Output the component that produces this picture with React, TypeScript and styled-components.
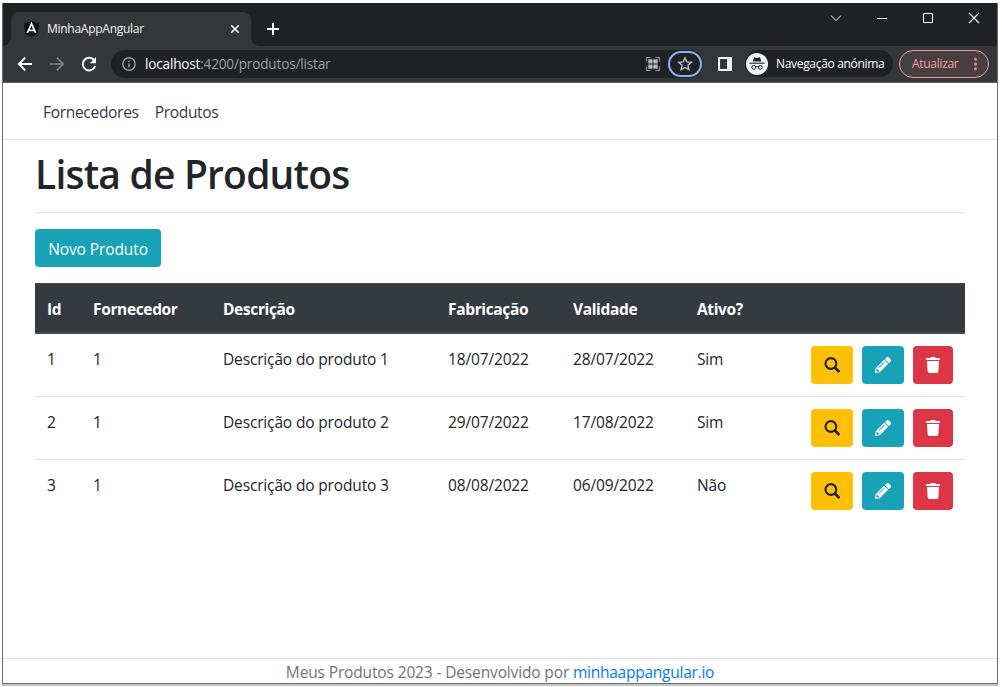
import React from "react";
import styled, { createGlobalStyle } from "styled-components";
import { FaPencilAlt, FaTrash } from "react-icons/fa";

const GlobalStyle = createGlobalStyle`
  * { box-sizing: border-box; }
  body {
    margin: 0;
    background: #fff;
    font-family: "Open Sans", "Noto Sans", sans-serif;
    color: #212529;
  }
  svg { display: block; flex: none; }
`;

const Desktop = styled.div`
  height: 687px;
  padding: 3px 4px 0 2px;
  overflow: hidden;
`;

const BrowserWindow = styled.div`
  display: flex;
  flex-direction: column;
  height: 681px;
  border: 1px solid #6b6b6b;
  border-top: 0;
  box-shadow: 0 2px 0 #c4c5c4;
`;

const TabStrip = styled.div`
  display: flex;
  height: 43px;
  flex: none;
  background: #202124;
`;

const Tab = styled.div`
  position: relative;
  display: flex;
  align-items: center;
  width: 240px;
  height: 34px;
  margin: 9px 0 0 8px;
  padding: 0 11px 0 13px;
  border-radius: 8px 8px 0 0;
  background: #35363a;
  &::before, &::after {
    content: "";
    position: absolute;
    bottom: 0;
    width: 8px;
    height: 8px;
  }
  &::before { left: -8px; background: radial-gradient(circle at 0 0, transparent 7.5px, #35363a 8px); }
  &::after { right: -8px; background: radial-gradient(circle at 100% 0, transparent 7.5px, #35363a 8px); }
`;

const TabTitle = styled.span`
  flex: 1;
  margin-left: 8px;
  font-size: 12px;
  line-height: 16px;
  letter-spacing: -0.27px;
  color: #f1f3f4;
`;

const NewTab = styled.div`
  margin: 20px 0 0 16px;
`;

const WindowControls = styled.div`
  display: flex;
  align-items: center;
  gap: 34px;
  height: 30px;
  margin-left: auto;
  padding-right: 17px;
`;

const Toolbar = styled.div`
  display: flex;
  align-items: center;
  height: 37px;
  flex: none;
  padding: 0 8px 1px 14px;
  border-bottom: 1px solid #5c5d60;
  background: #35363a;
`;

const NavIcons = styled.div`
  display: flex;
  gap: 16px;
`;

const AddressBar = styled.div`
  display: flex;
  align-items: center;
  width: 592px;
  height: 28px;
  margin-left: 14px;
  padding: 0 1px 0 11px;
  border-radius: 14px;
  background: #202124;
`;

const Url = styled.span`
  flex: 1;
  margin-left: 9px;
  padding-top: 1px;
  font-size: 13.6px;
  line-height: 20px;
  letter-spacing: -0.19px;
  color: #9aa0a6;
  b { font-weight: 400; color: #fff; }
`;

const StarButton = styled.span`
  display: flex;
  align-items: center;
  justify-content: center;
  width: 34px;
  height: 26px;
  margin-left: 8px;
  border: 2px solid #8ab4f8;
  border-radius: 13px;
`;

const SidePanelIcon = styled.span`
  width: 14px;
  height: 14px;
  margin-left: 15px;
  border: 2px solid #f1f3f4;
  border-right-width: 5px;
`;

const Incognito = styled.div`
  display: flex;
  align-items: center;
  gap: 8px;
  width: 148px;
  height: 27px;
  margin-left: 13px;
  padding-left: 1px;
  border-radius: 14px;
  background: #202124;
  color: #fff;
  font-size: 12px;
  letter-spacing: -0.32px;
  white-space: nowrap;
`;

const UpdateButton = styled.div`
  display: flex;
  align-items: center;
  justify-content: space-between;
  width: 90px;
  height: 28px;
  margin-left: 6px;
  padding: 0 11px 0 12px;
  border: 1px solid #f0a199;
  border-radius: 14px;
  background: #463e40;
  color: #f5a199;
  font-size: 12px;
  letter-spacing: -0.3px;
`;

const Navbar = styled.nav`
  display: flex;
  gap: 16px;
  height: 57px;
  flex: none;
  padding: 17px 40px 15px;
  border-bottom: 1px solid #dfe2e4;
`;

const NavLink = styled.a`
  font-size: 15.5px;
  line-height: 24px;
  letter-spacing: -0.3px;
  color: #343a40;
`;

const Main = styled.main`
  flex: 1;
  padding: 10px 32px 0;
`;

const Title = styled.h1`
  margin: 0;
  font-size: 39px;
  font-weight: 600;
  line-height: 48px;
  letter-spacing: -0.8px;
`;

const Divider = styled.hr`
  height: 1px;
  margin: 14px 0 16px;
  border: 0;
  background: #e3e3e3;
`;

const NewButton = styled.button`
  display: block;
  width: 126px;
  height: 38px;
  margin-bottom: 16px;
  padding: 2px 0 0;
  border: 0;
  border-radius: 4px;
  background: #17a2b8;
  color: #fff;
  font: 400 15.5px/24px "Open Sans", sans-serif;
  letter-spacing: -0.1px;
`;

const Table = styled.table`
  width: 930px;
  table-layout: fixed;
  border-collapse: separate;
  border-spacing: 0;
`;

const HeadCell = styled.th`
  height: 51px;
  padding: 2px 12px 0;
  border-top: 1px solid #454d55;
  border-bottom: 2px solid #454d55;
  background: #343a40;
  color: #fff;
  font-size: 15.5px;
  font-weight: 700;
  line-height: 24px;
  letter-spacing: -0.35px;
  text-align: left;
`;

const Row = styled.tr`
  &:not(:first-child) td { border-top: 1px solid #dee2e6; }
  &:first-child td { height: 62px; }
`;

const Cell = styled.td`
  height: 63px;
  padding: 13px 12px 0;
  font-size: 15.5px;
  line-height: 24px;
  letter-spacing: -0.15px;
  vertical-align: top;
  white-space: nowrap;
`;

const ActionsCell = styled(Cell)`
  padding-top: 12px;
`;

const Actions = styled.div`
  display: flex;
  gap: 9px;
`;

const ActionButton = styled.button<{ $bg: string; $fg?: string; $width?: number }>`
  display: flex;
  align-items: center;
  justify-content: center;
  width: ${(p) => p.$width ?? 42}px;
  height: 38px;
  padding: 0;
  border: 0;
  border-radius: 4px;
  background: ${(p) => p.$bg};
  color: ${(p) => p.$fg ?? "#fff"};
  font-size: 16px;
`;

const Footer = styled.footer`
  height: 25px;
  flex: none;
  padding-top: 1px;
  border-top: 1px solid #dedfe6;
  color: #6c757d;
  font-size: 15.5px;
  line-height: 24px;
  letter-spacing: -0.14px;
  text-align: center;
  a { color: #007bff; letter-spacing: -0.25px; }
`;

const columns = [
  { label: "Id", width: 46 },
  { label: "Fornecedor", width: 130 },
  { label: "Descrição", width: 225 },
  { label: "Fabricação", width: 125 },
  { label: "Validade", width: 124 },
  { label: "Ativo?", width: 114 },
  { label: "", width: 166 },
];

const products = [
  ["1", "1", "Descrição do produto 1", "18/07/2022", "28/07/2022", "Sim"],
  ["2", "1", "Descrição do produto 2", "29/07/2022", "17/08/2022", "Sim"],
  ["3", "1", "Descrição do produto 3", "08/08/2022", "06/09/2022", "Não"],
];

const AngularIcon = () => (
  <svg width="15" height="16" viewBox="0 0 15 16">
    <path d="M7.5 0 15 2.6 13.9 12.4 7.5 16 1.1 12.4 0 2.6Z" fill="#0c0f18" />
    <path d="M3.3 12 7.5 2.6 11.7 12M5 9.3H10" fill="none" stroke="#f4f4f4" strokeWidth="1.8" />
  </svg>
);

const Stroke = ({ d, w = 16, h = 16, color = "#fff", sw = 1 }: { d: string; w?: number; h?: number; color?: string; sw?: number }) => (
  <svg width={w} height={h} viewBox={`0 0 ${w} ${h}`} fill="none" stroke={color} strokeWidth={sw}>
    <path d={d} />
  </svg>
);

const ReloadIcon = () => (
  <svg width="16" height="16" viewBox="0 0 16 16">
    <path d="M13.4 4.6A6.3 6.3 0 1 0 14.2 9.8" fill="none" stroke="#f4f4f4" strokeWidth="2" />
    <path d="M15 1V7.2H8.8Z" fill="#f4f4f4" />
  </svg>
);

const InfoIcon = () => (
  <svg width="14" height="14" viewBox="0 0 14 14">
    <circle cx="7" cy="7" r="6.2" fill="none" stroke="#9aa0a6" strokeWidth="1.4" />
    <path d="M6.3 3.5H7.7V5H6.3ZM6.3 6.2H7.7V10.5H6.3Z" fill="#9aa0a6" />
  </svg>
);

const QrIcon = () => (
  <svg width="14" height="14" viewBox="0 0 14 14">
    <path d="M.5 4.5V.5H4.5M9.5.5H13.5V4.5M13.5 9.5V13.5H9.5M4.5 13.5H.5V9.5" fill="none" stroke="#a0a3a7" />
    <path d="M2.3 2.3H6.6V6.6H2.3ZM7.4 2.3H11.7V6.6H7.4ZM2.3 7.4H6.6V11.7H2.3ZM7.4 7.4H11.7V11.7H7.4Z" fill="#b6b9bd" />
  </svg>
);

const StarIcon = () => (
  <svg width="16" height="16" viewBox="0 0 16 16">
    <path d="m8 1.8 1.8 4.1 4.5.4-3.4 3 1 4.4L8 11.4l-3.9 2.3 1-4.4-3.4-3 4.5-.4Z" fill="none" stroke="#c4c7ca" strokeWidth="1.3" />
  </svg>
);

const IncognitoIcon = () => (
  <svg width="22" height="22" viewBox="0 0 22 22">
    <circle cx="11" cy="11" r="11" fill="#f1f3f4" />
    <path d="M6.6 8.6 7.8 4.9Q8 4.2 8.8 4.4L11 5 13.2 4.4Q14 4.2 14.2 4.9L15.4 8.6Z" fill="#202124" />
    <path d="M3.5 10.2H18.5" stroke="#202124" strokeWidth="1.1" />
    <g fill="none" stroke="#202124" strokeWidth="1">
      <circle cx="7.7" cy="14.3" r="1.9" />
      <circle cx="14.3" cy="14.3" r="1.9" />
      <path d="M9.6 14Q11 13.3 12.4 14" />
    </g>
  </svg>
);

const DotsIcon = () => (
  <svg width="3" height="14" viewBox="0 0 3 14" fill="#f28b82">
    <circle cx="1.5" cy="2" r="1.5" />
    <circle cx="1.5" cy="7" r="1.5" />
    <circle cx="1.5" cy="12" r="1.5" />
  </svg>
);

const SearchIcon = () => (
  <svg width="16" height="16" viewBox="0 0 16 16" fill="none" stroke="currentColor">
    <circle cx="6.9" cy="6.5" r="5.4" strokeWidth="2.1" />
    <path d="M10.6 10.3 15.3 15" strokeWidth="2.7" />
  </svg>
);

export default function App() {
  return (
    <Desktop>
      <GlobalStyle />
      <BrowserWindow>
        <TabStrip>
          <Tab>
            <AngularIcon />
            <TabTitle>MinhaAppAngular</TabTitle>
            <Stroke w={10} h={10} d="M1.2 1.2 8.8 8.8M8.8 1.2 1.2 8.8" sw={1.6} />
          </Tab>
          <NewTab>
            <Stroke w={12} h={12} d="M6 0V12M0 6H12" sw={2} />
          </NewTab>
          <WindowControls>
            <Stroke w={12} h={12} d="M1 3.5 6 8.5 11 3.5" />
            <Stroke w={12} h={12} d="M1 6.5H11" />
            <Stroke w={12} h={12} d="M1.5 1.5H10.5V10.5H1.5Z" />
            <Stroke w={12} h={12} d="M1 1 11 11M11 1 1 11" sw={1.2} />
          </WindowControls>
        </TabStrip>
        <Toolbar>
          <NavIcons>
            <Stroke d="M15 8H2M8.2 1.7 1.9 8 8.2 14.3" sw={1.9} />
            <Stroke d="M1 8H14M7.8 1.7 14.1 8 7.8 14.3" sw={1.7} color="#828387" />
            <ReloadIcon />
          </NavIcons>
          <AddressBar>
            <InfoIcon />
            <Url><b>localhost</b>:4200/produtos/listar</Url>
            <QrIcon />
            <StarButton><StarIcon /></StarButton>
          </AddressBar>
          <SidePanelIcon />
          <Incognito><IncognitoIcon />Navegação anónima</Incognito>
          <UpdateButton>Atualizar<DotsIcon /></UpdateButton>
        </Toolbar>
        <Navbar>
          <NavLink>Fornecedores</NavLink>
          <NavLink>Produtos</NavLink>
        </Navbar>
        <Main>
          <Title>Lista de Produtos</Title>
          <Divider />
          <NewButton>Novo Produto</NewButton>
          <Table>
            <colgroup>
              {columns.map((c) => <col key={c.label} width={c.width} />)}
            </colgroup>
            <thead>
              <tr>{columns.map((c) => <HeadCell key={c.label}>{c.label}</HeadCell>)}</tr>
            </thead>
            <tbody>
              {products.map((product) => (
                <Row key={product[0]}>
                  {product.map((value, i) => <Cell key={i}>{value}</Cell>)}
                  <ActionsCell>
                    <Actions>
                      <ActionButton $bg="#ffc107" $fg="#212529"><SearchIcon /></ActionButton>
                      <ActionButton $bg="#17a2b8"><FaPencilAlt /></ActionButton>
                      <ActionButton $bg="#dc3545" $width={40}><FaTrash /></ActionButton>
                    </Actions>
                  </ActionsCell>
                </Row>
              ))}
            </tbody>
          </Table>
        </Main>
        <Footer>Meus Produtos 2023 - Desenvolvido por <a>minhaappangular.io</a></Footer>
      </BrowserWindow>
    </Desktop>
  );
}
